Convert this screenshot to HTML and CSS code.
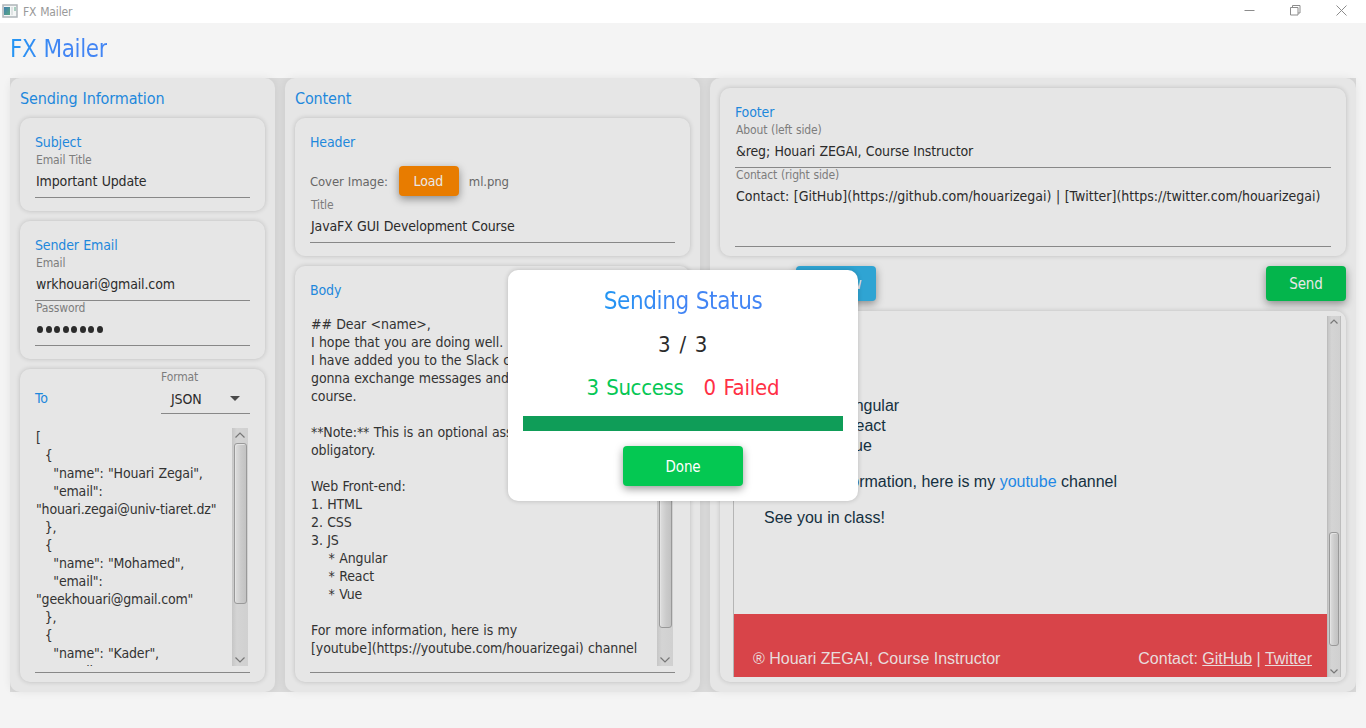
FILE: index.html
```html
<!DOCTYPE html>
<html lang="en">
<head>
<meta charset="utf-8">
<title>FX Mailer</title>
<link rel="stylesheet" href="styles.css">
</head>
<body>
<div class="titlebar">
  <svg class="app-icon" width="16" height="14" viewBox="0 0 16 14">
    <defs><linearGradient id="ig" x1="0" y1="0" x2="1" y2="1"><stop offset="0" stop-color="#3f7fb0"/><stop offset="1" stop-color="#5aa882"/></linearGradient></defs>
    <rect x="1" y="1" width="14" height="12" fill="#f4f6f6" stroke="#aeb5b9" stroke-width="1.500"/>
    <rect x="2" y="3" width="6" height="8" fill="url(#ig)"/>
    <rect x="9" y="3" width="2" height="8" fill="#dfe3e4"/>
    <rect x="12" y="3" width="2" height="4" fill="#a9cfc0"/>
  </svg>
  <span class="window-name">FX Mailer</span>
  <div class="window-controls">
    <svg width="11" height="11" viewBox="0 0 11 11"><path d="M.5 5.500h10" /></svg>
    <svg width="11" height="11" viewBox="0 0 11 11"><path d="M.5 2.500h7.500v7.500h-7.500zM2.500 2.500v-2h7.500v7.500h-2"/></svg>
    <svg width="11" height="11" viewBox="0 0 11 11"><path d="M.5.5l10 10M10.500.5l-10 10"/></svg>
  </div>
</div>

<header class="app-header"><h1 class="gradient-title">FX Mailer</h1></header>

<main class="board">
  <section class="column column-info">
    <h2>Sending Information</h2>
    <div class="card">
      <h3>Subject</h3>
      <div class="label">Email Title</div>
      <div class="field">Important Update</div>
    </div>
    <div class="card">
      <h3>Sender Email</h3>
      <div class="label">Email</div>
      <div class="field">wrkhouari@gmail.com</div>
      <div class="label label-next">Password</div>
      <div class="field"><span class="dots"><i></i><i></i><i></i><i></i><i></i><i></i><i></i><i></i></span></div>
    </div>
    <div class="card card-to">
      <div class="to-row">
        <h3>To</h3>
        <div class="format">
          <div class="label">Format</div>
          <div class="select"><span>JSON</span><svg width="10" height="5" viewBox="0 0 10 5"><path d="M0 0h10L5 5z" fill="#4a4a4a"/></svg></div>
        </div>
      </div>
      <div class="area area-to">
<pre class="code">[
  {
    "name": "Houari Zegai",
    "email":
"houari.zegai@univ-tiaret.dz"
  },
  {
    "name": "Mohamed",
    "email":
"geekhouari@gmail.com"
  },
  {
    "name": "Kader",
    "email":</pre>
        <div class="scroll">
          <svg class="arrow" width="10" height="6" viewBox="0 0 10 6"><path d="M.5 5.500L5 1l4.500 4.500"/></svg>
          <div class="track"><div class="thumb thumb-to"></div></div>
          <svg class="arrow" width="10" height="6" viewBox="0 0 10 6"><path d="M.5.5L5 5 9.500.5"/></svg>
        </div>
      </div>
    </div>
  </section>

  <section class="column column-content">
    <h2>Content</h2>
    <div class="card card-header">
      <h3>Header</h3>
      <div class="cover-row"><span>Cover Image:</span><button class="btn btn-load">Load</button><span>ml.png</span></div>
      <div class="label">Title</div>
      <div class="field">JavaFX GUI Development Course</div>
    </div>
    <div class="card card-body">
      <h3>Body</h3>
      <div class="area area-body">
<pre class="code">## Dear &lt;name&gt;,
I hope that you are doing well.
I have added you to the Slack channel
gonna exchange messages and
course.

**Note:** This is an optional assign
obligatory.

Web Front-end:
1. HTML
2. CSS
3. JS
    * Angular
    * React
    * Vue

For more information, here is my
[youtube](https://youtube.com/houarizegai) channel</pre>
        <div class="scroll">
          <svg class="arrow" width="10" height="6" viewBox="0 0 10 6"><path d="M.5 5.500L5 1l4.500 4.500"/></svg>
          <div class="track"><div class="thumb thumb-body"></div></div>
          <svg class="arrow" width="10" height="6" viewBox="0 0 10 6"><path d="M.5.5L5 5 9.500.5"/></svg>
        </div>
      </div>
    </div>
  </section>

  <section class="column column-preview">
    <div class="card card-footer">
      <h3>Footer</h3>
      <div class="label">About (left side)</div>
      <div class="field">&amp;reg; Houari ZEGAI, Course Instructor</div>
      <div class="label label-next">Contact (right side)</div>
      <div class="field field-tall">Contact: [GitHub](https://github.com/houarizegai) | [Twitter](https://twitter.com/houarizegai)</div>
    </div>
    <div class="actions">
      <button class="btn btn-preview">Preview</button>
      <button class="btn btn-send">Send</button>
    </div>
    <div class="card card-web">
      <div class="web">
        <div class="web-text">
          <ul><li>Angular</li><li>React</li><li>Vue</li></ul>
          <p>For more information, here is my <a>youtube</a> channel</p>
          <p>See you in class!</p>
        </div>
        <div class="web-footer"><span>® Houari ZEGAI, Course Instructor</span><span>Contact: <u>GitHub</u> | <u>Twitter</u></span></div>
      </div>
      <div class="scroll scroll-web">
        <svg class="arrow" width="8" height="5" viewBox="0 0 8 5"><path d="M.5 4.500L4 1l3.500 3.500"/></svg>
        <div class="track"><div class="thumb thumb-web"></div></div>
        <svg class="arrow" width="8" height="5" viewBox="0 0 8 5"><path d="M.5.5L4 4 7.500.5"/></svg>
      </div>
    </div>
  </section>
</main>

<div class="dialog">
  <h1 class="gradient-title">Sending Status</h1>
  <div class="count">3 / 3</div>
  <div class="results"><span class="ok">3 Success</span><span class="bad">0 Failed</span></div>
  <div class="progress"></div>
  <button class="btn btn-done">Done</button>
</div>
</body>
</html>
```

FILE: styles.css
```css
* { box-sizing: border-box; }

body {
  margin: 0;
  width: 1366px;
  height: 728px;
  overflow: hidden;
  position: relative;
  background: #f4f4f4;
  color: #2b2b2b;
  font-family: "DejaVu Sans Condensed", "DejaVu Sans", sans-serif;
  font-stretch: condensed;
  font-size: 14px;
  letter-spacing: -0.13px;
  word-spacing: 0.5px;
}

h1, h2, h3, p, ul, pre { margin: 0; padding: 0; font-weight: 400; }

/* Window frame */
.titlebar {
  height: 23px;
  background: #fff;
  display: flex;
  align-items: center;
  padding: 0 19px 0 2px;
}
.app-icon { margin-top: -1px; }
.window-name { margin-left: 5px; font-size: 12px; color: #999; }
.window-controls { margin-left: auto; display: flex; gap: 35px; padding-bottom: 3px; }
.window-controls svg { fill: none; stroke: #8c8c8c; display: block; }

.app-header { height: 55px; padding: 11px 10px 0; display: flex; }
.gradient-title {
  font-size: 24px;
  line-height: 30px;
  letter-spacing: -0.38px;
  background: linear-gradient(100deg, #2196f3, #4285f4 50%);
  -webkit-background-clip: text;
  background-clip: text;
  color: transparent;
}

/* Columns and cards */
.board {
  margin: 0 10px;
  height: 614px;
  display: grid;
  grid-template-columns: 265px 415px 1fr;
  grid-template-rows: 614px;
  gap: 10px;
  background: #dadada;
}
.column {
  background: #e6e6e6;
  border-radius: 10px;
  padding: 0 10px 10px;
  box-shadow: 0 0 8px rgba(0, 0, 0, .07);
  display: flex;
  flex-direction: column;
  gap: 10px;
  min-width: 0;
}
.column-preview { padding-top: 10px; }
h2 { height: 30px; padding-top: 11px; line-height: 20px; font-size: 16px; color: #1e88dc; }
h3 { font-size: 14px; line-height: 18px; color: #1e88dc; }
.card {
  background: #e6e6e6;
  border-radius: 10px;
  padding: 15px 15px 13px;
  box-shadow: 0 0 5px rgba(0, 0, 0, .18);
}
.label { font-size: 12px; line-height: 19px; height: 17px; color: #7d7d7d; padding-left: 1px; }
.label-next { height: 15px; line-height: 15px; }
.field {
  height: 30px;
  line-height: 26px;
  padding-left: 1px;
  border-bottom: 1px solid #888;
  white-space: nowrap;
}
.dots { display: flex; gap: 2.500px; height: 27px; align-items: center; padding: 0 0 1px 1px; }
.dots i { width: 6px; height: 7px; border-radius: 50%; background: #2b2b2b; }

.card-to { flex: 1; padding: 0 15px 9px; display: flex; flex-direction: column; min-height: 0; }
.to-row { display: flex; flex: none; justify-content: space-between; height: 59px; }
.to-row h3 { padding-top: 20px; }
.format { width: 89px; }
.format .label { padding-left: 0; line-height: 17px; }
.select {
  height: 28px;
  padding: 0 10px 2px;
  display: flex;
  justify-content: space-between;
  align-items: center;
  border-bottom: 1px solid #888;
}
.select span { line-height: 22px; }
.area { flex: 1; min-height: 0; display: flex; justify-content: space-between; border-bottom: 1px solid #888; }
.area-to, .area-body { padding: 0 2px 6px 1px; }
.code { font: inherit; font-size: 14px; line-height: 18px; overflow: hidden; color: #333; }
.area-to .code { letter-spacing: -0.17px; }
.area-body { margin-top: 9px; }
.area-body .code { padding-top: 7px; letter-spacing: -0.11px; }

.scroll {
  width: 16px;
  flex: none;
  display: flex;
  flex-direction: column;
  align-items: center;
  justify-content: space-between;
  padding: 4px 0 3px;
  background: linear-gradient(90deg, #c6c6c6, #d4d4d4 30%, #d0d0d0);
}
.arrow { fill: none; stroke: #777; stroke-width: 1.200; display: block; flex: none; }
.track { flex: 1; min-height: 0; width: 13px; padding-top: 4px; }
.thumb {
  border: 1px solid #999;
  border-radius: 3px;
  background: linear-gradient(90deg, #dedede, #cbcbcb 55%, #c2c2c2);
  box-shadow: inset 1px 1px 0 #e3e3e3;
}
.thumb-to { height: 161px; margin-top: 1px; }
.thumb-body { height: 306px; }

.card-header { height: 138px; }
.cover-row {
  display: flex;
  align-items: center;
  height: 30px;
  margin: 15px 0 0;
  font-size: 13px;
  color: #666;
  letter-spacing: -0.1px;
}
.cover-row + .label { height: 16px; }
.card-header .field { height: 31px; line-height: 29px; }
.card-body { flex: 1; min-height: 0; padding-bottom: 9px; display: flex; flex-direction: column; }

.btn {
  border: 0;
  padding: 1px 0 0;
  border-radius: 4px;
  font: inherit;
  font-size: 15px;
  letter-spacing: -0.15px;
  color: #e8e8e8;
  box-shadow: 0 3px 8px rgba(0, 0, 0, .4);
}
.btn-load { width: 60px; height: 30px; margin: 0 10px 0 11px; padding: 0 1px 1px 0; font-size: 14px; background: #e87c00; }
.actions { display: flex; justify-content: space-between; padding-left: 76px; height: 35px; }
.btn-preview { width: 80px; background: #2fa4d3; }
.btn-send { width: 80px; background: #04b54c; }

.card-footer { height: 168px; }
.card-footer .field-tall { height: 64px; letter-spacing: 0; }

/* Rendered mail preview */
.card-web { flex: 1; min-height: 0; padding: 5px 5px 5px 13px; display: flex; }
.web {
  flex: 1;
  border-left: 1px solid #b5b5b5;
  display: flex;
  flex-direction: column;
  justify-content: space-between;
  font-family: "Liberation Sans", Arial, sans-serif;
  font-size: 16px;
  letter-spacing: 0;
  word-spacing: 0;
  color: #15303f;
}
.web-text { padding: 80px 30px 0; }
.web-text ul { padding-left: 80px; line-height: 20px; list-style: circle; }
.web-text p { line-height: 20px; margin-top: 16px; }
.web-text a { color: #1e88e5; }
.web-footer {
  height: 63px;
  padding: 27px 15px 0 19px;
  display: flex;
  justify-content: space-between;
  line-height: 36px;
  background: #d84449;
  color: #e8dcdc;
}
.scroll-web { width: 14px; padding: 3px 0; border: solid #bdbdbd; border-width: 0 1px; }
.scroll-web .track { width: 10px; padding-top: 0; }
.thumb-web { height: 114px; margin-top: 208px; }

/* Status dialog */
.dialog {
  position: absolute;
  left: 508px;
  top: 270px;
  width: 350px;
  height: 231px;
  padding: 16px 15px 15px;
  border-radius: 10px;
  background: #fff;
  box-shadow: 0 0 5px rgba(0, 0, 0, .2);
  display: flex;
  flex-direction: column;
  align-items: center;
}
.count, .results { font-size: 22px; line-height: 28px; letter-spacing: -0.35px; word-spacing: 1.500px; }
.count { margin-top: 15px; letter-spacing: 0.500px; }
.results { margin-top: 15px; display: flex; gap: 20px; }
.ok { color: #06c755; }
.bad { color: #ff3045; letter-spacing: -0.2px; }
.progress { width: 320px; height: 15px; margin-top: 14px; background: #0f9d58; }
.btn-done { width: 120px; height: 40px; margin-top: 15px; background: #04c852; color: #fff; }
```
